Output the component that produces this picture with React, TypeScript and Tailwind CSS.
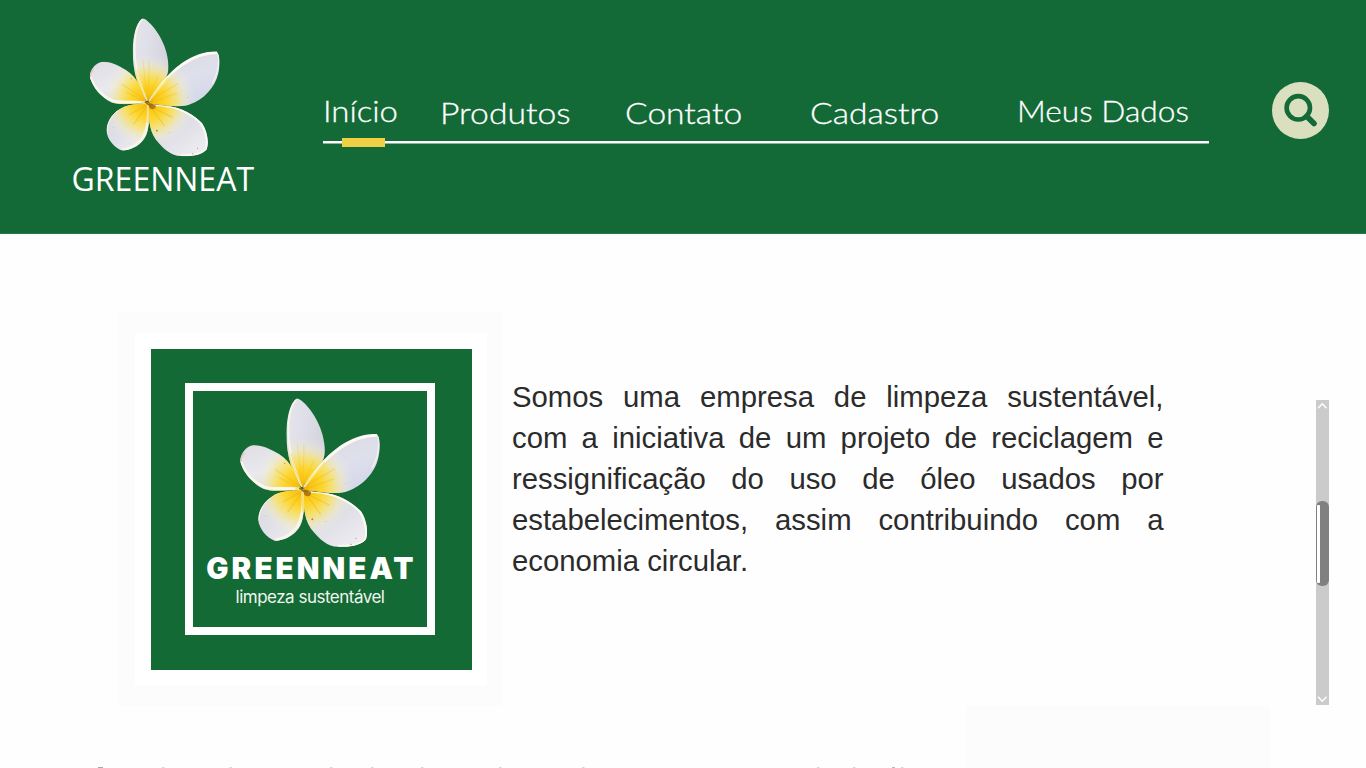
import React from "react";

type FlowerProps = { id: string; className: string };

function Flower({ id, className }: FlowerProps) {
  const f = (n: string) => `url(#${id}-${n})`;
  return (
    <svg viewBox="0 0 540 525" preserveAspectRatio="none" className={className} aria-hidden="true">
      <defs>
        <radialGradient id={`${id}-glow`} gradientUnits="userSpaceOnUse" cx="250" cy="308" r="152">
          <stop offset="0" stopColor="#eaa40c" />
          <stop offset="0.14" stopColor="#fac412" />
          <stop offset="0.38" stopColor="#fcd62e" />
          <stop offset="0.6" stopColor="#f9e36c" stopOpacity="0.8" />
          <stop offset="0.8" stopColor="#f4eebc" stopOpacity="0.4" />
          <stop offset="1" stopColor="#f0eee8" stopOpacity="0" />
        </radialGradient>
        <linearGradient id={`${id}-top`} x1="0" y1="0" x2="1" y2="0.3">
          <stop offset="0" stopColor="#e8e6ea" />
          <stop offset="0.5" stopColor="#dfdfea" />
          <stop offset="1" stopColor="#d3d2dd" />
        </linearGradient>
        <linearGradient id={`${id}-right`} x1="0.3" y1="0" x2="0.8" y2="1">
          <stop offset="0" stopColor="#dcd9dd" />
          <stop offset="0.5" stopColor="#dfe0ed" />
          <stop offset="1" stopColor="#d0d4e6" />
        </linearGradient>
        <linearGradient id={`${id}-left`} x1="0.2" y1="0" x2="0.5" y2="1">
          <stop offset="0" stopColor="#dfdde1" />
          <stop offset="0.6" stopColor="#e9e9f0" />
          <stop offset="1" stopColor="#d8d6dc" />
        </linearGradient>
        <linearGradient id={`${id}-low`} x1="0" y1="0" x2="0.8" y2="1">
          <stop offset="0" stopColor="#dad8e1" />
          <stop offset="0.55" stopColor="#dfdfe8" />
          <stop offset="1" stopColor="#f0eef0" />
        </linearGradient>
        <clipPath id={`${id}-ct`}><path d="M244 306C218 266 199 216 199 144C200 100 209 54 231 40C250 44 294 94 308 151C318 192 316 220 302 237C281 264 260 287 248 307Z" /></clipPath>
        <clipPath id={`${id}-cr`}><path d="M250 306C280 261 311 218 358 184C393 159 435 145 470 147C480 156 482 187 475 218C465 263 428 302 384 318C354 330 318 322 252 315Z" /></clipPath>
        <clipPath id={`${id}-cl`}><path d="M242 308C226 267 215 232 178 208C150 190 120 178 98 181C76 185 59 211 61 230C70 263 98 296 132 312C165 323 203 313 242 316Z" /></clipPath>
        <clipPath id={`${id}-cb`}><path d="M247 316C213 316 177 319 155 335C130 352 113 379 115 407C118 431 140 458 164 467C190 468 217 454 232 435C249 417 254 381 251 318Z" /></clipPath>
        <clipPath id={`${id}-cw`}><path d="M251 317C251 365 252 400 273 431C298 464 326 486 355 485C391 488 425 480 438 463C446 438 439 403 423 379C398 353 357 326 307 323Z" /></clipPath>
      </defs>
      <g clipPath={f("ct")}>
        <rect x="190" y="30" width="130" height="290" fill={f("top")} />
        <rect x="190" y="30" width="130" height="290" fill={f("glow")} />
        <path d="M229 43C208 65 203 118 207 170C213 231 232 277 244 306" fill="none" stroke="#f6f4ec" strokeWidth="6" />
        <path d="M213 205Q224 260 244 306" fill="none" stroke="#f3dc86" strokeWidth="3" />
        <path d="M252 175L249 300M283 225Q265 260 249 302M232 175L245 295" stroke="#eeb30b" strokeOpacity="0.2" strokeWidth="4" fill="none" />
      </g>
      <g clipPath={f("cr")}>
        <rect x="240" y="140" width="245" height="190" fill={f("right")} />
        <rect x="240" y="140" width="245" height="190" fill={f("glow")} />
        <path d="M252 304C282 259 316 218 360 189C395 165 436 151 471 151" fill="none" stroke="#fbfaf4" strokeWidth="9" />
        <path d="M248 308L315 232" stroke="#fbe67c" strokeWidth="6" />
        <path d="M256 303L345 251M260 310L342 282" stroke="#e9ac08" strokeOpacity="0.2" strokeWidth="5" />
        <path d="M474 151C480 184 474 218 456 250" fill="none" stroke="#f4f1ef" strokeWidth="4" />
      </g>
      <g clipPath={f("cl")}>
        <rect x="50" y="170" width="200" height="155" fill={f("left")} />
        <rect x="50" y="170" width="200" height="155" fill={f("glow")} />
        <path d="M63 231C72 262 100 292 135 307C167 315 205 307 244 313" fill="none" stroke="#f9f7ee" strokeWidth="9" />
        <path d="M165 253L238 302M178 278L235 308" stroke="#e7a608" strokeOpacity="0.22" strokeWidth="4" />
        <path d="M62 230Q63 214 73 203" fill="none" stroke="#ecbfc2" strokeWidth="4" />
      </g>
      <g clipPath={f("cb")}>
        <rect x="105" y="310" width="155" height="165" fill={f("low")} />
        <rect x="105" y="310" width="155" height="165" fill={f("glow")} />
        <path d="M249 320C251 360 250 392 232 426C217 447 190 462 166 465" fill="none" stroke="#f8f5ec" strokeWidth="9" />
        <path d="M244 325L202 382M239 323L188 351" stroke="#dea408" strokeOpacity="0.25" strokeWidth="4" />
        <path d="M150 338C130 355 116 379 117 406" fill="none" stroke="#f4f0e6" strokeWidth="4" />
      </g>
      <g clipPath={f("cw")}>
        <rect x="245" y="312" width="205" height="180" fill={f("low")} />
        <rect x="245" y="312" width="205" height="180" fill={f("glow")} />
        <path d="M260 320C325 319 381 341 420 380C437 406 442 440 436 465C420 480 391 484 355 483" fill="none" stroke="#fbf9f2" strokeWidth="7" />
        <path d="M257 326L302 388M263 328L328 360" stroke="#db9e05" strokeOpacity="0.25" strokeWidth="4" />
      </g>
      <path d="M240 309L273 320Q275 332 263 334Q250 331 249 320Z" fill="#a3700c" fillOpacity="0.85" />
      <path d="M226 311L248 316L250 380" fill="none" stroke="#f5de78" strokeWidth="6" />
      <path d="M238 309L251 319L264 321" fill="none" stroke="#a76a0b" strokeWidth="5" />
      <g fill="#a5884d">
        <circle cx="277" cy="403" r="3" /><circle cx="318" cy="409" r="1.2" /><circle cx="408" cy="460" r="1.8" />
        <circle cx="393" cy="478" r="2" /><circle cx="194" cy="235" r="1.8" /><circle cx="377" cy="295" r="1.2" />
        <circle cx="138" cy="393" r="1.2" />
      </g>
    </svg>
  );
}

const links = [
  { label: "Início", style: "ml-0 pt-0 scale-x-[1.135]" },
  { label: "Produtos", style: "-ml-[1px] pt-[2px] scale-x-[1.163]" },
  { label: "Contato", style: "-ml-[0.5px] pt-[2px] scale-x-[1.158]" },
  { label: "Cadastro", style: "-ml-[0.5px] pt-[2px] scale-x-[1.158]" },
  { label: "Meus Dados", style: "-ml-[1px] pt-0 scale-x-[1.093]" },
];

const lines = [
  "Somos uma empresa de limpeza sustentável,",
  "com a iniciativa de um projeto de reciclagem e",
  "ressignificação do uso de óleo usados por",
  "estabelecimentos, assim contribuindo com a",
];

const tips = [162, 229.5, 330, 371, 421, 499, 582, 817, 853, 901];

export default function App() {
  return (
    <div className="flex h-[768px] w-[1366px] flex-col overflow-hidden bg-[#fefefe]">
      <header className="flex h-[234px] shrink-0 border-b border-[#2a7749] bg-[#146a37] text-white">
        <div className="flex w-[323px] shrink-0 flex-col pt-[6px]">
          <Flower id="brand" className="ml-[70.7px] h-[162.4px] w-[167.4px] shrink-0" />
          <div className="-mt-[11px] ml-[71.6px] whitespace-nowrap font-['Open_Sans',sans-serif] text-[32px] leading-[44px]">GREENNEAT</div>
        </div>
        <nav className="w-[886px] shrink-0 pt-[90px]">
          <div className="grid h-[48px] grid-cols-[118px_184px_185px_208px_191px] font-['Lato',sans-serif] text-[29px] font-light leading-[41px]">
            {links.map((l) => (
              <a key={l.label} href="#" className={"origin-left justify-self-start whitespace-nowrap [-webkit-text-stroke:0.3px_white] " + l.style}>{l.label}</a>
            ))}
          </div>
          <div className="flex h-[9px] items-center bg-[linear-gradient(#fff,#fff)] bg-[length:100%_2.5px] bg-[position:0_3px] bg-no-repeat pl-[19px]">
            <div className="h-[9px] w-[43px] bg-[#efcf43]" />
          </div>
        </nav>
        <div className="pl-[63px] pt-[82px]">
          <button className="flex h-[56.5px] w-[57px] rounded-full bg-[#d9dfbf]" aria-label="Buscar">
            <svg viewBox="0 0 57 56.5" className="h-full w-full" fill="none" stroke="#146a37">
              <circle cx="26.3" cy="25.8" r="11.7" strokeWidth="4.6" />
              <path d="M34.7 34.3L42 41.6" strokeWidth="5.6" strokeLinecap="round" />
            </svg>
          </button>
        </div>
      </header>

      <main className="flex h-[472px] shrink-0 pl-[118px]">
        <section className="mt-[78px] h-[394px] w-[384px] shrink-0 bg-[#fcfcfc] pl-[17px] pt-[21px]">
          <div className="h-[352px] w-[352px] bg-white pl-[15.5px] pt-[15.5px]">
            <div className="h-[321px] w-[321px] bg-[#136a35] pl-[34.5px] pt-[34.5px]">
              <div className="flex h-[252px] w-[250px] flex-col items-center border-[8px] border-white">
                <Flower id="card" className="-mt-[6px] ml-0 h-[175px] w-[180px] shrink-0" />
                <div className="-mt-[10px] whitespace-nowrap pl-[3px] font-['Inter',sans-serif] text-[29.5px] font-black leading-[36px] tracking-[3.1px] text-white">GREENNEAT</div>
                <div className="mt-px whitespace-nowrap font-['Inter',sans-serif] text-[17px] leading-[20px] tracking-[-0.5px] text-[#f0f6ee]">limpeza sustentável</div>
              </div>
            </div>
          </div>
        </section>
        <section className="ml-[10px] mt-[142px] w-[651.5px] shrink-0 font-['Liberation_Sans',sans-serif] text-[29.3px] leading-[41px] text-[#2b2b2b]">
          {lines.map((l) => (
            <div key={l} className="text-justify [text-align-last:justify]">{l}</div>
          ))}
          <div>economia circular.</div>
        </section>
        <div className="ml-[152.5px] mt-[166px] flex h-[305px] w-[13px] shrink-0 flex-col items-center bg-[#cbcbcb]">
          <svg viewBox="0 0 12.5 10" className="h-[10px] w-[12.5px] shrink-0" fill="none" stroke="#fff" strokeWidth="1.4"><path d="M2 8.2L6.25 3.7L10.5 8.2" /></svg>
          <div className="mt-[91px] flex h-[85px] w-full shrink-0 rounded-[6px] bg-[#808080] pl-px pt-[4px]">
            <div className="h-[78px] w-[3px] rounded-[1px] bg-white" />
          </div>
          <svg viewBox="0 0 12.5 10" className="mt-auto h-[10px] w-[12.5px] shrink-0" fill="none" stroke="#fff" strokeWidth="1.4"><path d="M2 1.7L6.25 6.2L10.5 1.7" /></svg>
        </div>
      </main>

      <footer className="flex h-[62px] shrink-0 items-end">
        <svg viewBox="0 0 966 1" className="h-px w-[966px] shrink-0" aria-hidden="true">
          <rect x="98" y="0" width="5" height="1" fill="#a6a6a6" />
          <rect x="892" y="0" width="3" height="1" fill="#b9b9b9" />
          {tips.map((x) => <rect key={x} x={x} y="0" width="2.5" height="1" fill="#d6d6d6" />)}
        </svg>
        <div className="h-[62px] w-[304px] bg-[#fcfcfc]" />
      </footer>
    </div>
  );
}
